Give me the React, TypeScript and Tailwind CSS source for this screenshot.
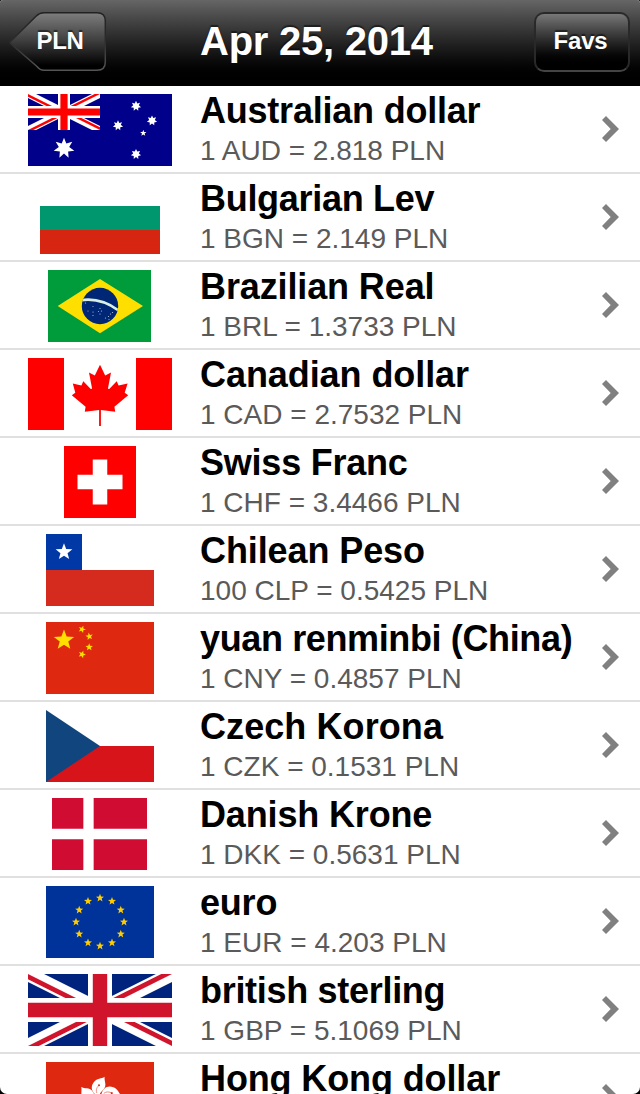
import type { ReactNode } from 'react';

type Currency = {
  name: string;
  tracking: string;
  rate?: string;
  flag: ReactNode;
};

// Points of a regular star, first tip pointing up
function starPoints(cx: number, cy: number, r: number, tips = 5, inner = 0.42, rotate = 0) {
  const points: string[] = [];
  for (let i = 0; i < tips * 2; i++) {
    const radius = i % 2 === 0 ? r : r * inner;
    const angle = (Math.PI * i) / tips - Math.PI / 2 + (rotate * Math.PI) / 180;
    points.push(`${(cx + radius * Math.cos(angle)).toFixed(2)},${(cy + radius * Math.sin(angle)).toFixed(2)}`);
  }
  return points.join(' ');
}

function Flag({ width, children }: { width: number; children: ReactNode }) {
  return (
    <svg width={width} height={72} viewBox={`0 0 ${width} 72`} className="block">
      {children}
    </svg>
  );
}

// Drawn on a 60x30 grid, scaled by the caller
function UnionJack({ id, blue, red }: { id: string; blue: string; red: string }) {
  return (
    <>
      <clipPath id={`${id}-box`}>
        <path d="M0 0h60v30H0z" />
      </clipPath>
      <clipPath id={`${id}-diag`}>
        <path d="M30 15h30v15zv15H0zH0V0zV0h30z" />
      </clipPath>
      <g clipPath={`url(#${id}-box)`}>
        <path d="M0 0h60v30H0z" fill={blue} />
        <path d="M0 0l60 30m0-30L0 30" stroke="#fff" strokeWidth={6} />
        <path d="M0 0l60 30m0-30L0 30" stroke={red} strokeWidth={4} clipPath={`url(#${id}-diag)`} />
        <path d="M30 0v30M0 15h60" stroke="#fff" strokeWidth={10} />
        <path d="M30 0v30M0 15h60" stroke={red} strokeWidth={6} />
      </g>
    </>
  );
}

const australia = (
  <Flag width={144}>
    <rect width={144} height={72} fill="#00008b" />
    <g transform="scale(1.2)">
      <UnionJack id="au" blue="#00008b" red="#ff0000" />
    </g>
    <g fill="#fff">
      <polygon points={starPoints(36, 54.3, 10.6, 7, 0.5)} />
      <polygon points={starPoints(108, 12, 5.2, 7, 0.55)} />
      <polygon points={starPoints(90, 31.5, 5.2, 7, 0.55)} />
      <polygon points={starPoints(124, 26.6, 5.2, 7, 0.55)} />
      <polygon points={starPoints(108, 60.2, 5.2, 7, 0.55)} />
      <polygon points={starPoints(115.3, 39, 3.3)} />
    </g>
  </Flag>
);

const bulgaria = (
  <Flag width={120}>
    <rect width={120} height={24} fill="#fff" />
    <rect y={24} width={120} height={24} fill="#00966e" />
    <rect y={48} width={120} height={24} fill="#d62612" />
  </Flag>
);

const brazil = (
  <Flag width={104}>
    <clipPath id="br-globe">
      <circle cx={52} cy={36} r={18.2} />
    </clipPath>
    <rect width={103} height={72} fill="#009b3a" />
    <path d="M9.7 36L52 9l43 27-43 27.3z" fill="#fedf00" />
    <circle cx={52} cy={36} r={18.2} fill="#002776" />
    <path d="M33 30.2q20-3 38 10.6" fill="none" stroke="#d9efe4" strokeWidth={2.6} clipPath="url(#br-globe)" />
    <g fill="#b9c6dc">
      <circle cx={37.5} cy={33} r={0.6} />
      <circle cx={45} cy={36.5} r={0.5} />
      <circle cx={40} cy={41} r={0.5} />
      <circle cx={45} cy={42} r={0.6} />
      <circle cx={45} cy={45.5} r={0.6} />
      <circle cx={52} cy={38.5} r={0.6} />
      <circle cx={50.5} cy={41.5} r={0.5} />
      <circle cx={53.5} cy={41} r={0.6} />
      <circle cx={52} cy={44} r={0.6} />
      <circle cx={57.5} cy={48} r={0.6} />
      <circle cx={60.5} cy={46.5} r={0.6} />
      <circle cx={62.5} cy={44} r={0.6} />
      <circle cx={64.5} cy={42.5} r={0.6} />
      <circle cx={61} cy={49.5} r={0.5} />
    </g>
  </Flag>
);

const canada = (
  <Flag width={144}>
    <rect width={144} height={72} fill="#fff" />
    <path d="M0 0h36v72H0zM108 0h36v72h-36z" fill="#ff0000" />
    <path
      d="M72 6.8L77.2 17.5 83 14.4 80 30.3Q80.3 31.6 81.5 30.7L88.7 23.2 90.6 27.6 99.6 25.5 96.7 34.8 100.2 37.3 86.4 48.8 87.2 53.8 72.9 52V68H71.1V52L56.8 53.8 57.6 48.8 43.8 37.3 47.3 34.8 44.8 25.5 53.4 27.6 55.3 23.2 62.5 30.7Q63.7 31.6 64 30.3L61 14.4 66.8 17.5z"
      fill="#ff0000"
    />
  </Flag>
);

const switzerland = (
  <Flag width={72}>
    <rect width={72} height={72} fill="#ff0000" />
    <path d="M36 13.5v45M13.5 36h45" stroke="#fff" strokeWidth={14.5} />
  </Flag>
);

const chile = (
  <Flag width={108}>
    <rect width={108} height={36} fill="#fff" />
    <rect y={36} width={108} height={36} fill="#d52b1e" />
    <rect width={36} height={36} fill="#0039a6" />
    <polygon points={starPoints(18, 18, 8.8)} fill="#fff" />
  </Flag>
);

const china = (
  <Flag width={108}>
    <rect width={108} height={72} fill="#de2910" />
    <g fill="#ffde00">
      <polygon points={starPoints(18, 18.2, 10.7)} />
      <polygon points={starPoints(36, 7.3, 3.9, 5, 0.42, 20)} />
      <polygon points={starPoints(43.3, 14.4, 3.9, 5, 0.42, -10)} />
      <polygon points={starPoints(43.2, 25.2, 3.9)} />
      <polygon points={starPoints(36, 32.4, 3.9, 5, 0.42, 20)} />
    </g>
  </Flag>
);

const czechia = (
  <Flag width={108}>
    <rect width={108} height={36} fill="#fff" />
    <rect y={36} width={108} height={36} fill="#d7141a" />
    <path d="M0 0l54 36L0 72z" fill="#11457e" />
  </Flag>
);

const denmark = (
  <Flag width={96}>
    <rect width={95} height={72} fill="#d00c33" />
    <path d="M36.5 0v72M0 36h96" stroke="#fff" strokeWidth={10.3} />
  </Flag>
);

const europe = (
  <Flag width={108}>
    <rect width={108} height={72} fill="#003399" />
    <g fill="#ffcc00">
      {Array.from({ length: 12 }, (_, i) => {
        const angle = (i * Math.PI) / 6;
        return <polygon key={i} points={starPoints(54 + 24 * Math.sin(angle), 36 - 24 * Math.cos(angle), 4.2)} />;
      })}
    </g>
  </Flag>
);

const britain = (
  <Flag width={144}>
    <g transform="scale(2.4)">
      <UnionJack id="gb" blue="#00247d" red="#cf142b" />
    </g>
  </Flag>
);

const hongKong = (
  <Flag width={108}>
    <rect width={108} height={72} fill="#de2910" />
    {[0, 72, 144, 216, 288].map((angle) => (
      <g key={angle} transform={`rotate(${angle} 54 36)`}>
        <path
          d="M53.5 35C46 31.5 43.5 25.5 48 20C51 16 55.5 16.8 58.7 14.7C57.8 18.5 61 22.5 58.3 26.5C56 29.5 53 31 53.5 35z"
          fill="#fff"
        />
        <path d="M50.8 31C49.8 28.5 50.3 26 52.5 23.8" fill="none" stroke="#de2910" strokeWidth={0.5} />
        <circle cx={53} cy={23.3} r={1} fill="#de2910" />
      </g>
    ))}
  </Flag>
);

const currencies: Currency[] = [
  { name: 'Australian dollar', tracking: 'tracking-[-0.22px]', rate: '1 AUD = 2.818 PLN', flag: australia },
  { name: 'Bulgarian Lev', tracking: 'tracking-[-0.3px]', rate: '1 BGN = 2.149 PLN', flag: bulgaria },
  { name: 'Brazilian Real', tracking: 'tracking-[-0.12px]', rate: '1 BRL = 1.3733 PLN', flag: brazil },
  { name: 'Canadian dollar', tracking: 'tracking-[-0.07px]', rate: '1 CAD = 2.7532 PLN', flag: canada },
  { name: 'Swiss Franc', tracking: 'tracking-[-0.22px]', rate: '1 CHF = 3.4466 PLN', flag: switzerland },
  { name: 'Chilean Peso', tracking: 'tracking-[-0.1px]', rate: '100 CLP = 0.5425 PLN', flag: chile },
  { name: 'yuan renminbi (China)', tracking: 'tracking-[-0.37px]', rate: '1 CNY = 0.4857 PLN', flag: china },
  { name: 'Czech Korona', tracking: 'tracking-[0.08px]', rate: '1 CZK = 0.1531 PLN', flag: czechia },
  { name: 'Danish Krone', tracking: 'tracking-[-0.15px]', rate: '1 DKK = 0.5631 PLN', flag: denmark },
  { name: 'euro', tracking: 'tracking-[-0.2px]', rate: '1 EUR = 4.203 PLN', flag: europe },
  { name: 'british sterling', tracking: 'tracking-[-0.3px]', rate: '1 GBP = 5.1069 PLN', flag: britain },
  { name: 'Hong Kong dollar', tracking: 'tracking-[-0.12px]', flag: hongKong },
];

function BackButton({ label }: { label: string }) {
  return (
    <button className="relative h-[60px] w-24 pl-1 text-2xl leading-[58px] font-bold tracking-[-0.3px] [text-shadow:0_-2px_1px_rgba(0,0,0,0.5)]">
      <svg width={98} height={62} viewBox="0 0 98 62" className="absolute -top-px -left-px">
        <defs>
          <linearGradient id="back-fill" x1="0" y1="0" x2="0" y2="1">
            <stop offset="0" stopColor="#7e7e7e" />
            <stop offset="0.5" stopColor="#3c3c3c" />
            <stop offset="0.92" stopColor="#000" />
          </linearGradient>
          <linearGradient id="back-edge" x1="0" y1="0" x2="0" y2="1">
            <stop offset="0" stopColor="#222" />
            <stop offset="0.5" stopColor="#2c2c2c" />
            <stop offset="1" stopColor="#555" />
          </linearGradient>
        </defs>
        <path
          d="M35 1.8H88Q96.3 1.8 96.3 10V51Q96.3 59.3 88 59.3H35Q31 59.3 28 55.5L1.5 32.5Q0.8 31.5 1.5 30.5L27 5.2Q30.500 1.8 35 1.8z"
          fill="url(#back-fill)"
          stroke="url(#back-edge)"
          strokeWidth={1.5}
        />
      </svg>
      <span className="relative -top-px">{label}</span>
    </button>
  );
}

function Chevron() {
  return (
    <svg width={17} height={26} viewBox="0 0 17 26" className="block shrink-0">
      <path d="M4 0l13 13L4 26l-4-4 8.7-9L0 4z" fill="#808080" />
    </svg>
  );
}

export default function App() {
  return (
    <div className="h-[1094px] w-[640px] overflow-hidden bg-black font-['Liberation_Sans',Arial,sans-serif]">
      <div className="h-full overflow-hidden rounded-t-[3px] rounded-b-[7px] bg-white">
        {/* Navigation bar */}
        <header className="flex h-[86px] items-start bg-linear-to-b from-[#666] to-black px-2.5 text-white">
          <div className="pt-3">
            <BackButton label="PLN" />
          </div>
          <h1 className="ml-[94px] text-[40px] leading-[82px] font-bold tracking-[-0.24px] whitespace-nowrap [text-shadow:0_-2px_1px_rgba(0,0,0,0.5)]">
            Apr 25, 2014
          </h1>
          <div className="ml-auto pt-3">
            <button className="h-[60px] w-24 rounded-[10px] border-2 border-x-[#292929] border-t-[#292929] border-b-[#444] bg-linear-to-b from-[#7e7e7e] to-black to-92% bg-origin-border pr-[3px] pb-0.5 text-2xl leading-[54px] font-bold tracking-[-0.2px] [text-shadow:0_-2px_1px_rgba(0,0,0,0.5)]">
              Favs
            </button>
          </div>
        </header>

        {/* Exchange rates */}
        <ul>
          {currencies.map((currency) => (
            <li key={currency.name} className="flex h-[88px] items-start border-b-2 border-[#e0e0e0] pr-[21px]">
              <div className="flex w-[200px] shrink-0 justify-center pt-2">{currency.flag}</div>
              <div className="min-w-0 flex-1 pt-[3px] whitespace-nowrap">
                <h2 className={`text-4xl leading-[44px] font-bold text-black ${currency.tracking}`}>{currency.name}</h2>
                {currency.rate && <p className="text-[28px] leading-9 text-[#5a5a5a]">{currency.rate}</p>}
              </div>
              <div className="pt-[30px]">
                <Chevron />
              </div>
            </li>
          ))}
        </ul>
      </div>
    </div>
  );
}
